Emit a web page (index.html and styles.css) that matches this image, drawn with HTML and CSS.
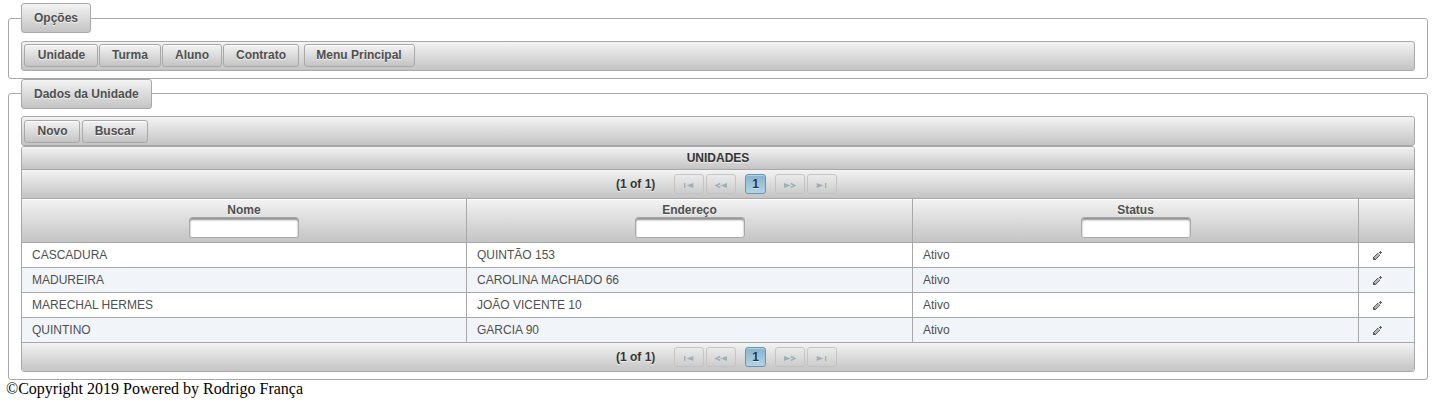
FILE: index.html
```html
<!DOCTYPE html>
<html lang="pt-BR">
<head>
<meta charset="utf-8">
<title>Unidades</title>
<link rel="stylesheet" href="styles.css">
</head>
<body>
<svg class="sprites" width="0" height="0" aria-hidden="true">
  <symbol id="first" viewBox="0 0 12 6"><path d="M1 1h1.3v5H1zM10.3 1v5L3.6 3.5z"/></symbol>
  <symbol id="prev" viewBox="0 0 12 6"><path d="M12 1v5L5.4 3.5z"/><path class="chevron" d="M5.2 1.5 1 3.5 5.2 5.5"/></symbol>
  <symbol id="next" viewBox="0 0 12 6"><path d="M0 1v5L6.6 3.5z"/><path class="chevron" d="M6.8 1.5 11 3.5 6.8 5.5"/></symbol>
  <symbol id="last" viewBox="0 0 12 6"><path d="M.7 1v5L7.4 3.5zM9 1h1.3v5H9z"/></symbol>
  <symbol id="pencil" viewBox="0 0 9 9"><path d="M7 0h1v1h1v1H8v1H7V2H6V1h1zM4 2h1v1H4zM3 3h1v1H3zM2 4h1v1H2zM1 5h1v1H1zM0 6h1v1h1v1h1v1H0zM6 4h1v1H6zM5 5h1v1H5zM4 6h1v1H4zM3 7h1v1H3z"/><path class="shine" d="M5 2h1v1h1v1H6v1H5v1H4v1H3v1H2V7H1V6h1V5h1V4h1V3h1z"/></symbol>
</svg>
<fieldset class="panel panel-options">
  <legend class="legend">Opções</legend>
  <div class="toolbar">
    <button class="btn btn-unit">Unidade</button>
    <button class="btn btn-class">Turma</button>
    <button class="btn btn-student">Aluno</button>
    <button class="btn btn-contract">Contrato</button>
    <button class="btn btn-menu">Menu Principal</button>
  </div>
</fieldset>
<fieldset class="panel panel-data">
  <legend class="legend">Dados da Unidade</legend>
  <div class="toolbar toolbar-data">
    <button class="btn btn-new">Novo</button>
    <button class="btn btn-search">Buscar</button>
  </div>
  <div class="datatable">
    <div class="caption">UNIDADES</div>
    <div class="pager">
      <span class="count">(1 of 1)</span>
      <span class="page"><svg class="arrow"><use href="#first"/></svg></span>
      <span class="page"><svg class="arrow"><use href="#prev"/></svg></span>
      <span class="page-active">1</span>
      <span class="page"><svg class="arrow"><use href="#next"/></svg></span>
      <span class="page"><svg class="arrow"><use href="#last"/></svg></span>
    </div>
    <div class="row head">
      <div class="th">Nome<input class="filter" type="text" aria-label="Nome"></div>
      <div class="th">Endereço<input class="filter" type="text" aria-label="Endereço"></div>
      <div class="th">Status<input class="filter" type="text" aria-label="Status"></div>
      <div class="th"></div>
    </div>
    <div class="row"><div class="td">CASCADURA</div><div class="td">QUINTÃO 153</div><div class="td">Ativo</div><div class="td action"><svg class="pencil"><use href="#pencil"/></svg></div></div>
    <div class="row odd"><div class="td">MADUREIRA</div><div class="td">CAROLINA MACHADO 66</div><div class="td">Ativo</div><div class="td action"><svg class="pencil"><use href="#pencil"/></svg></div></div>
    <div class="row"><div class="td">MARECHAL HERMES</div><div class="td">JOÃO VICENTE 10</div><div class="td">Ativo</div><div class="td action"><svg class="pencil"><use href="#pencil"/></svg></div></div>
    <div class="row odd"><div class="td">QUINTINO</div><div class="td">GARCIA 90</div><div class="td">Ativo</div><div class="td action"><svg class="pencil"><use href="#pencil"/></svg></div></div>
    <div class="pager">
      <span class="count">(1 of 1)</span>
      <span class="page"><svg class="arrow"><use href="#first"/></svg></span>
      <span class="page"><svg class="arrow"><use href="#prev"/></svg></span>
      <span class="page-active">1</span>
      <span class="page"><svg class="arrow"><use href="#next"/></svg></span>
      <span class="page"><svg class="arrow"><use href="#last"/></svg></span>
    </div>
  </div>
</fieldset>
<footer class="footer">©Copyright 2019 Powered by Rodrigo França</footer>
</body>
</html>
```

FILE: styles.css
```css
* { box-sizing: border-box; }
body { margin: 0; padding: 3px 6px 0 8px; background: #fff; overflow: hidden; font: 12px "Liberation Sans", Arial, sans-serif; color: #4f4f4f; }
.sprites { display: block; }
.panel { margin: 0; border: 1px solid #a8a8a8; border-radius: 3px; min-width: 0; }
.panel-options { height: 76px; padding: 8px 12px 7px; }
.panel-data { height: 301px; margin-top: -.2px; padding: 7px 12px 7px; }
.legend, .btn, .toolbar, .caption, .pager, .head .th { background: linear-gradient(#f3f3f3, #c4c4c4); }
.legend, .btn, .toolbar { border: 1px solid #a8a8a8; border-radius: 3px; }
.legend { height: 30px; padding: 0 12px; line-height: 28px; font-weight: bold; text-shadow: 0 1px 0 rgba(255,255,255,.7); }
.toolbar { display: flex; height: 30px; padding: 2px; }
.toolbar-data { padding-top: 3px; }
.btn { height: 23px; padding: 0; margin-right: 1px; font: bold 12px/21px "Liberation Sans", Arial, sans-serif; color: #4f4f4f; text-shadow: 0 1px 0 rgba(255,255,255,.7); box-shadow: inset 0 1px 0 #fff; white-space: nowrap; }
.btn-unit { width: 74px; padding-left: 1px; }
.btn-class { width: 62px; }
.btn-student { width: 60px; }
.btn-contract { width: 76px; margin-right: 5px; }
.btn-menu { width: 111px; padding-right: 1px; }
.btn-new { width: 56px; margin-right: 2px; padding-left: 1px; }
.btn-search { width: 66px; }
.datatable { border: 1px solid #a8a8a8; border-radius: 3px; overflow: hidden; }
.pager, .row { border-top: 1px solid #a8a8a8; }
.caption { height: 22px; line-height: 22px; text-align: center; font-weight: bold; color: #333; text-shadow: 0 1px 0 rgba(255,255,255,.7); }
.pager { display: flex; align-items: center; height: 29px; padding-left: 594px; font-weight: bold; color: #333; text-shadow: 0 1px 0 rgba(255,255,255,.7); }
.count { width: 58px; }
.page, .page-active { display: flex; align-items: center; justify-content: center; height: 20px; border-radius: 3px; }
.page { width: 30px; margin-right: 2px; padding-top: 2px; border: 1px solid #c0c0c0; opacity: .85; }
.page-active { width: 21px; margin: 0 9px 0 7px; border: 1px solid #6695ae; background: linear-gradient(#85b2cb, #b4d4e5); box-shadow: inset 0 1px 0 #b5d2e0; color: #1c3650; text-shadow: 0 1px 0 rgba(255,255,255,.5); }
.arrow { flex: none; width: 12px; height: 6px; fill: #94a8b3; }
.chevron { fill: none; stroke: #94a8b3; stroke-width: 1.4; }
.row { display: grid; grid-template-columns: 445px 446px 446px 55px; height: 25px; }
.row.odd { background: #f1f5fa; }
.row.head { height: 44px; }
.th, .td { border-right: 1px solid #a8a8a8; }
.th:last-child, .td:last-child { border-right: 0; }
.th { display: flex; flex-direction: column; align-items: center; padding-top: 4px; line-height: 14px; font-weight: bold; box-shadow: inset 0 1px 0 #fff; text-shadow: 0 1px 0 rgba(255,255,255,.7); }
.filter { width: 110px; height: 21px; margin: 0; padding: 0; border: 1px solid #a8a8a8; border-radius: 3px; background: #fff; box-shadow: inset 0 2px 2px #8f8f8f; }
.td { padding-left: 10px; line-height: 24px; }
.action { padding: 8px 0 0 14px; line-height: 0; }
.pencil { width: 9px; height: 9px; fill: #5c5c5c; shape-rendering: crispEdges; }
.shine { fill: #b4b4b4; }
.footer { margin-left: -2px; font: 16px/18px "Liberation Serif", "Times New Roman", serif; color: #000; }
```
